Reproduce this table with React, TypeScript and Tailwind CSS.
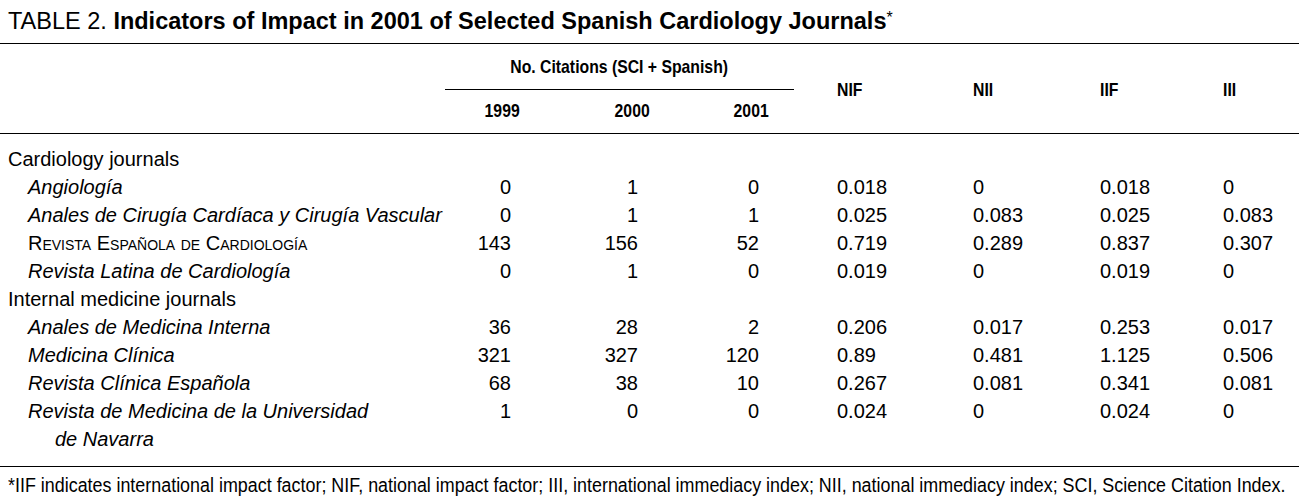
const rows: {
  label: string;
  kind: "group" | "italic" | "caps";
  cont?: string;
  v?: string[];
}[] = [
  { label: "Cardiology journals", kind: "group" },
  { label: "Angiología", kind: "italic", v: ["0", "1", "0", "0.018", "0", "0.018", "0"] },
  {
    label: "Anales de Cirugía Cardíaca y Cirugía Vascular",
    kind: "italic",
    v: ["0", "1", "1", "0.025", "0.083", "0.025", "0.083"],
  },
  {
    label: "Revista Española de Cardiología",
    kind: "caps",
    v: ["143", "156", "52", "0.719", "0.289", "0.837", "0.307"],
  },
  { label: "Revista Latina de Cardiología", kind: "italic", v: ["0", "1", "0", "0.019", "0", "0.019", "0"] },
  { label: "Internal medicine journals", kind: "group" },
  { label: "Anales de Medicina Interna", kind: "italic", v: ["36", "28", "2", "0.206", "0.017", "0.253", "0.017"] },
  { label: "Medicina Clínica", kind: "italic", v: ["321", "327", "120", "0.89", "0.481", "1.125", "0.506"] },
  { label: "Revista Clínica Española", kind: "italic", v: ["68", "38", "10", "0.267", "0.081", "0.341", "0.081"] },
  {
    label: "Revista de Medicina de la Universidad",
    cont: "de Navarra",
    kind: "italic",
    v: ["1", "0", "0", "0.024", "0", "0.024", "0"],
  },
];

const grid = "grid grid-cols-[445px_115px_144px_94px_137px_127px_128px_109px]";

// condensed look: Liberation Sans squeezed horizontally (no narrow face installed)
function Cond({ children, left }: { children: React.ReactNode; left?: boolean }) {
  return (
    <span className={`inline-block whitespace-nowrap scale-x-[0.83] ${left ? "origin-left" : "origin-center"}`}>
      {children}
    </span>
  );
}

function Values({ v }: { v: string[] }) {
  return (
    <>
      <div className="pr-[49px] text-right">{v[0]}</div>
      <div className="pr-[66px] text-right">{v[1]}</div>
      <div className="pr-[39px] text-right">{v[2]}</div>
      <div className="pl-[39px]">{v[3]}</div>
      <div className="pl-[38px]">{v[4]}</div>
      <div className="pl-[38px]">{v[5]}</div>
      <div className="pl-[33px]">{v[6]}</div>
    </>
  );
}

export default function App() {
  return (
    <div className="h-[502px] w-[1299px] overflow-hidden bg-white font-['Liberation_Sans',Arial,sans-serif] text-black">
      <div className="flex h-[44px] items-center border-b border-black pl-2 text-[23.5px]">
        <span>TABLE 2.&nbsp;</span>
        <span className="font-bold">Indicators of Impact in 2001 of Selected Spanish Cardiology Journals</span>
        <span className="-mt-2 text-[16px]">*</span>
      </div>

      <div className={`${grid} border-b border-black text-[19px] font-bold`}>
        <div className="row-span-2" />
        <div className="col-span-3 mr-[4px] flex h-[46px] items-center justify-center border-b border-black pt-[1px]">
          <Cond>No. Citations (SCI + Spanish)</Cond>
        </div>
        <div className="row-span-2 flex items-center pt-[4px] pl-[39px]">
          <Cond left>NIF</Cond>
        </div>
        <div className="row-span-2 flex items-center pt-[4px] pl-[38px]">
          <Cond left>NII</Cond>
        </div>
        <div className="row-span-2 flex items-center pt-[4px] pl-[38px]">
          <Cond left>IIF</Cond>
        </div>
        <div className="row-span-2 flex items-center pt-[4px] pl-[33px]">
          <Cond left>III</Cond>
        </div>
        <div className="flex h-[43px] items-center justify-center">
          <Cond>1999</Cond>
        </div>
        <div className="flex h-[43px] items-center justify-center">
          <Cond>2000</Cond>
        </div>
        <div className="flex h-[43px] items-center justify-center">
          <Cond>2001</Cond>
        </div>
      </div>

      <div className="border-b border-black pt-[11px] pb-[13px] text-[20px] leading-[28px]">
        {rows.map((r) => (
          <div key={r.label}>
            <div className={grid}>
              {r.kind === "group" ? (
                <div className="col-span-8 pl-2">{r.label}</div>
              ) : (
                <>
                  <div
                    className={
                      r.kind === "italic" ? "pl-[28px] italic" : "pl-[28px] [font-variant:small-caps]"
                    }
                  >
                    {r.label}
                  </div>
                  <Values v={r.v!} />
                </>
              )}
            </div>
            {r.cont && <div className="pl-[55px] italic">{r.cont}</div>}
          </div>
        ))}
      </div>

      <div className="pt-[6px] pl-2 text-[20px] leading-[24px]">
        <span className="inline-block origin-left scale-x-[0.895] whitespace-nowrap">
          *IIF indicates international impact factor; NIF, national impact factor; III, international immediacy
          index; NII, national immediacy index; SCI, Science Citation Index.
        </span>
      </div>
    </div>
  );
}
